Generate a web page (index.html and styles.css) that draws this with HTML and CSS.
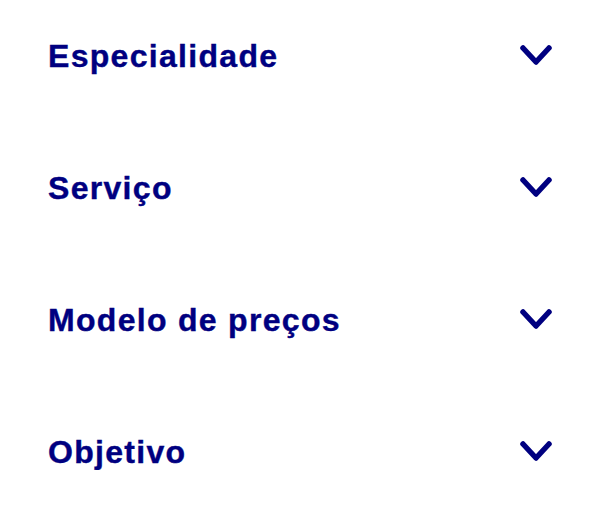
FILE: index.html
```html
<!DOCTYPE html>
<html lang="pt-BR">
  <head>
    <meta charset="UTF-8" />
    <meta name="viewport" content="width=device-width, initial-scale=1.0" />
    <title>Filtros</title>
    <link rel="stylesheet" href="styles.css">
  </head>
  <body>
    <!-- filtros -->
    <div class="filters">
      <div class="filter">
        <span class="filter-title">Especialidade</span>
        <svg class="chevron" viewBox="0 0 32 22"><path d="M3 3 L16 17 L29 3" /></svg>
      </div>
      <div class="filter">
        <span class="filter-title">Serviço</span>
        <svg class="chevron" viewBox="0 0 32 22"><path d="M3 3 L16 17 L29 3" /></svg>
      </div>
      <div class="filter">
        <span class="filter-title">Modelo de preços</span>
        <svg class="chevron" viewBox="0 0 32 22"><path d="M3 3 L16 17 L29 3" /></svg>
      </div>
      <div class="filter">
        <span class="filter-title">Objetivo</span>
        <svg class="chevron" viewBox="0 0 32 22"><path d="M3 3 L16 17 L29 3" /></svg>
      </div>
    </div>
  </body>
</html>
```

FILE: styles.css
```css
* {
  margin: 0;
  padding: 0;
  box-sizing: border-box;
}

body {
  font-family: "Liberation Sans", Arial, sans-serif;
  background: #fff;
  color: #000080;
}

/* lista de filtros */
.filters {
  display: flex;
  flex-direction: column;
  gap: 96px;
  padding: 38px 48px 0 48px;
}

.filter {
  display: flex;
  justify-content: space-between;
  align-items: center;
  height: 36px;
  cursor: pointer;
}

.filter-title {
  font-size: 32px;
  line-height: 36px;
  font-weight: bold;
  letter-spacing: 1.3px;
  -webkit-text-stroke: 0.4px #000080;
}

.chevron {
  width: 32px;
  height: 22px;
  fill: none;
  stroke: #000080;
  stroke-width: 5.5;
  stroke-linecap: round;
  stroke-linejoin: round;
}
```
